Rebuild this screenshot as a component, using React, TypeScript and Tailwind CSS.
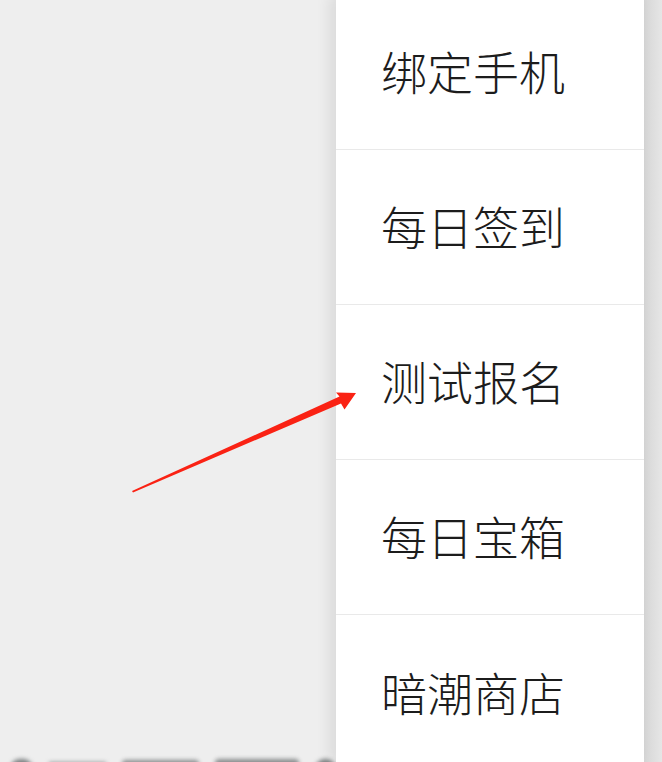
import React from 'react';

const items = ['绑定手机', '每日签到', '测试报名', '每日宝箱', '暗潮商店'];

const Arrow: React.FC = () => {
  return (
    <svg
      className="absolute left-0 top-0 z-20 pointer-events-none"
      width="662"
      height="762"
      viewBox="0 0 662 762"
      fill="none"
      xmlns="http://www.w3.org/2000/svg"
    >
      <polygon
        points="133,492.5 341,403.5 344.5,409.5 356,393 336,392.5 339.5,396.5 132,491"
        fill="#fa2214"
      />
    </svg>
  );
};

const BottomBlur: React.FC = () => {
  return (
    <div className="flex items-start gap-4 pl-[10px] -mb-[18px] blur-[2px]">
      <div className="w-[24px] h-[20px] rounded-full bg-[#7b7f80]" />
      <div className="w-[58px] h-[18px] mt-[3px] bg-[#9a9d9e]" />
      <div className="w-[80px] h-[20px] mt-[1px] rounded-sm bg-[#8a8d8e]" />
      <div className="w-[86px] h-[20px] rounded-sm bg-[#8a8d8e]" />
      <div className="w-[22px] h-[20px] rounded-full bg-[#7b7f80]" />
    </div>
  );
};

const MenuItem: React.FC<{ label: string; last?: boolean }> = ({ label, last }) => {
  return (
    <div
      className={
        'h-[155px] shrink-0 flex items-center pl-[45px] pb-[4px] ' +
        (last ? '' : 'border-b border-[#e9e9e9]')
      }
    >
      <span className="text-[46px] leading-none font-light text-[#1c1c1c] font-['Noto_Sans_CJK_SC',sans-serif]">
        {label}
      </span>
    </div>
  );
};

const App: React.FC = () => {
  return (
    <div className="relative w-[662px] h-[762px] overflow-hidden flex bg-[#eeeeee]">
      <div className="w-[336px] flex flex-col justify-end">
        <BottomBlur />
      </div>
      <div className="relative z-10 w-[308px] bg-white shadow-[-6px_0_14px_rgba(0,0,0,0.09)] flex flex-col -mt-[5px]">
        {items.map((label, i) => (
          <MenuItem key={label} label={label} last={i === items.length - 1} />
        ))}
      </div>
      <div className="w-[18px] bg-gradient-to-r from-[#d6d6d6] to-[#e6e6e6]" />
      <Arrow />
    </div>
  );
};

export default App;
